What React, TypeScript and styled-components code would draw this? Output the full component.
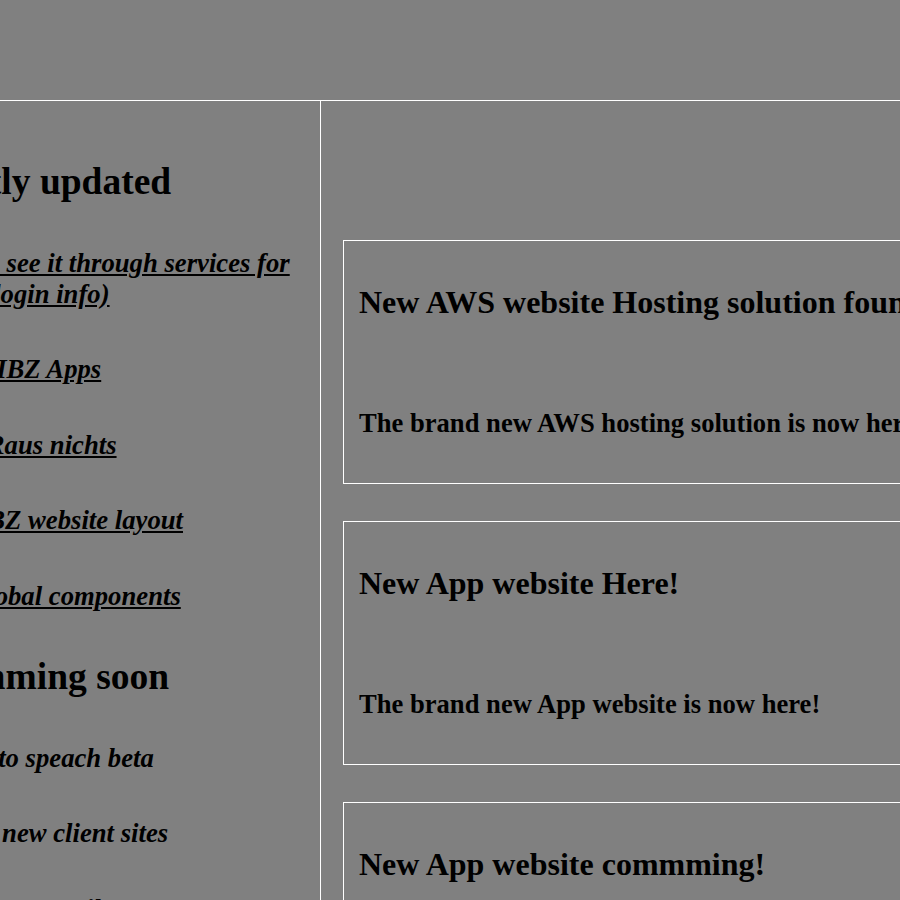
import React from "react";
import styled, { createGlobalStyle } from "styled-components";

const GlobalStyle = createGlobalStyle`
  html, body {
    margin: 0;
    padding: 0;
    background: #808080;
    overflow: hidden;
  }
  body {
    font-family: "Liberation Serif", "Times New Roman", serif;
    color: #000;
  }
`;

const Page = styled.div`
  width: 1450px;
  margin-left: -109px;
`;

const Header = styled.header`
  height: 100px;
  border-bottom: 1px solid #fff;
`;

const Body = styled.div`
  display: flex;
  align-items: stretch;
  min-height: 860px;
`;

const Sidebar = styled.aside`
  box-sizing: border-box;
  width: 430px;
  flex: none;
  border-right: 1px solid #fff;
  padding-top: 60px;
  display: flex;
  flex-direction: column;
  gap: 44.5px;
`;

const SideHeading = styled.h1`
  margin: 0;
  font-size: 37.5px;
  line-height: 42px;
  font-weight: bold;
  white-space: nowrap;
`;

const ItemList = styled.ul`
  margin: 0;
  padding: 0 0 0 54px;
  list-style: none;
  display: flex;
  flex-direction: column;
  gap: 44.5px;
`;

const SideItem = styled.li`
  margin: 0;
  font-size: 26.7px;
  line-height: 31px;
  font-weight: bold;
  font-style: italic;
`;

const SideLink = styled.a`
  color: #000;
  text-decoration: underline;
`;

const Main = styled.main`
  flex: 1;
  padding: 139px 0 0 22px;
  display: flex;
  flex-direction: column;
  gap: 37px;
`;

const Card = styled.article`
  width: 760px;
  border: 1px solid #fff;
  padding: 43px 15px 45px;
`;

const CardTitle = styled.h1`
  margin: 0;
  font-size: 32px;
  line-height: 37px;
  font-weight: bold;
  white-space: nowrap;
`;

const CardText = styled.h2`
  margin: 87px 0 0;
  font-size: 26.6px;
  line-height: 30px;
  font-weight: bold;
  white-space: nowrap;
`;

const updated = [
  "Apps see it through services for me (login info)",
  "Our IBZ Apps",
  "Wo Raus nichts",
  "In IBZ website layout",
  "A Global components",
];

const upcoming = ["Text to speach beta", "Now new client sites", "New IBZ mail"];

const news = [
  {
    title: "New AWS website Hosting solution found!",
    text: "The brand new AWS hosting solution is now here!",
  },
  {
    title: "New App website Here!",
    text: "The brand new App website is now here!",
  },
  {
    title: "New App website commming!",
    text: "The brand new App website is comming soon!",
  },
];

export default function App() {
  return (
    <>
      <GlobalStyle />
      <Page>
        <Header />
        <Body>
          <Sidebar>
            <SideHeading>Recently updated</SideHeading>
            <ItemList>
              {updated.map((t) => (
                <SideItem key={t}>
                  <SideLink href="#">{t}</SideLink>
                </SideItem>
              ))}
            </ItemList>
            <SideHeading>Upcomming soon</SideHeading>
            <ItemList>
              {upcoming.map((t) => (
                <SideItem key={t}>{t}</SideItem>
              ))}
            </ItemList>
          </Sidebar>
          <Main>
            {news.map((n) => (
              <Card key={n.title}>
                <CardTitle>{n.title}</CardTitle>
                <CardText>{n.text}</CardText>
              </Card>
            ))}
          </Main>
        </Body>
      </Page>
    </>
  );
}
